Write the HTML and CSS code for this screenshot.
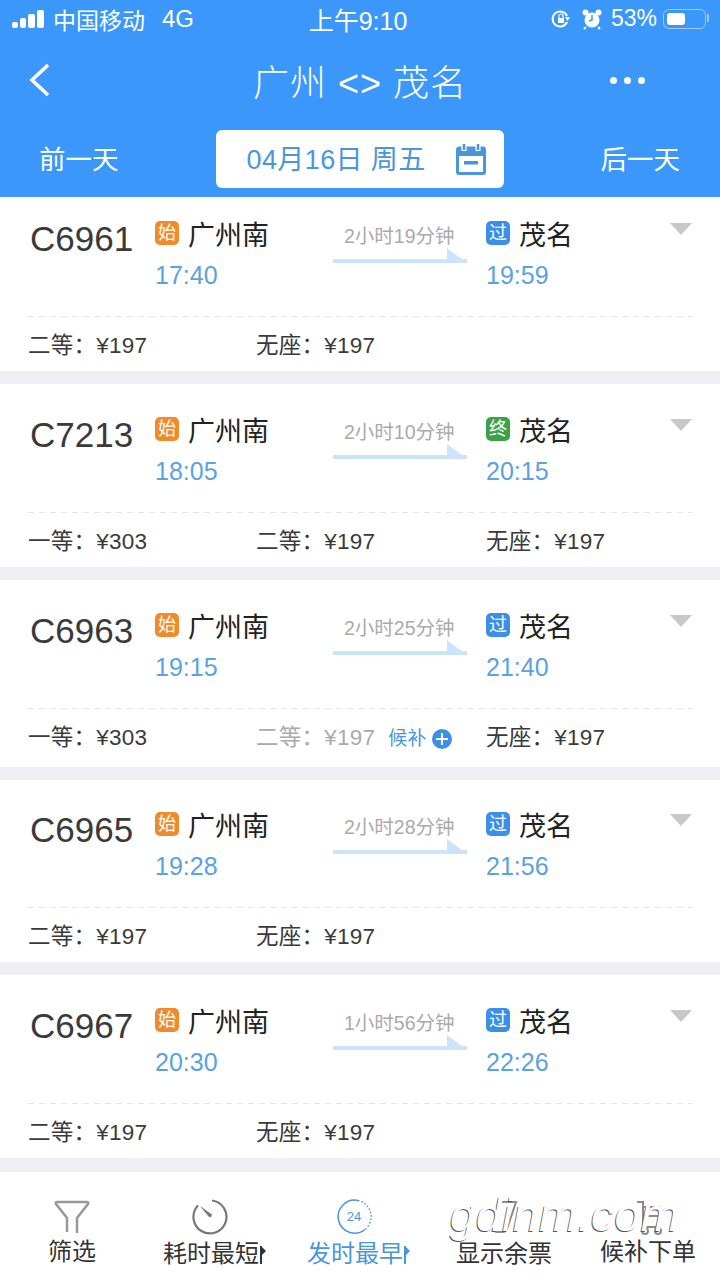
FILE: index.html
```html
<!DOCTYPE html>
<html lang="zh-CN">
<head>
    <meta charset="UTF-8">
    <meta name="viewport" content="width=device-width, initial-scale=1.0">
    <title>广州 &lt;&gt; 茂名</title>
    <link rel="stylesheet" href="styles.css">
</head>
<body>
    <div class="page">
        <header class="header">
            <div class="status">
                <div class="status-left">
                    <svg class="signal" width="34" height="20" viewBox="0 0 34 20"><rect x="0" y="13" width="6" height="6" rx="2" fill="#fff"/><rect x="8" y="9" width="6" height="10" rx="2" fill="#fff"/><rect x="16" y="5" width="7" height="14" rx="2" fill="#fff"/><rect x="25" y="1" width="7" height="18" rx="2" fill="#fff"/></svg>
                    <span>中国移动</span>
                    <span class="net">4G</span>
                </div>
                <div class="status-time">上午9:10</div>
                <div class="status-right">
                    <svg width="20" height="20" viewBox="0 0 20 20"><path d="M16 13a7.500 7.500 0 1 1 0-6" fill="none" stroke="#fff" stroke-width="2"/><path d="M14 8h5l-2.500 4z" fill="#fff"/><rect x="7" y="9" width="6" height="5" fill="#fff"/><path d="M8 9V7a2 2 0 0 1 4 0v2" fill="none" stroke="#fff" stroke-width="1.200"/></svg>
                    <svg class="alarm" width="22" height="22" viewBox="0 0 22 22"><circle cx="11" cy="12" r="7.500" fill="#fff"/><path d="M11 7v5l-3 1" fill="none" stroke="#3c97fa" stroke-width="1.500"/><circle cx="4.500" cy="4.500" r="3" fill="#fff"/><circle cx="17.500" cy="4.500" r="3" fill="#fff"/><path d="M5 19l-2 2M17 19l2 2" stroke="#fff" stroke-width="2"/></svg>
                    <span class="percent">53%</span>
                    <div class="battery"><div class="battery-fill"></div></div>
                </div>
            </div>
            <div class="nav">
                <svg width="26" height="36" viewBox="0 0 26 36"><path d="M21 3L5 18l16 15" fill="none" stroke="#fff" stroke-width="3.600"/></svg>
                <div class="nav-title">广州 &lt;&gt; 茂名</div>
                <div class="nav-more"><i></i><i></i><i></i></div>
            </div>
            <div class="dates">
                <div class="day">前一天</div>
                <div class="date-box">
                    <span class="date-text">04月16日 周五</span>
                    <svg width="30" height="32" viewBox="0 0 30 32"><path d="M3 5h24a1.500 1.500 0 0 1 1.500 1.500V29a1.500 1.500 0 0 1-1.500 1.500H3A1.500 1.500 0 0 1 1.500 29V6.500A1.500 1.500 0 0 1 3 5z" fill="none" stroke="#4a96dc" stroke-width="3"/><path d="M2 5h26v8H2z" fill="#4a96dc"/><path d="M8 1v7M22 1v7" stroke="#fff" stroke-width="5"/><path d="M8 1v6M22 1v6" stroke="#4a96dc" stroke-width="2.500"/><rect x="8" y="18" width="14" height="3.500" fill="#4a96dc"/></svg>
                </div>
                <div class="day">后一天</div>
            </div>
        </header>

        <main class="list">
            <section class="card first">
                <div class="train">
                    <div class="train-no">C6961</div>
                    <div class="stop"><div class="stop-name"><b class="tag orange">始</b>广州南</div><div class="stop-time">17:40</div></div>
                    <div class="route"><div class="duration">2小时19分钟</div><div class="arrow"></div></div>
                    <div class="stop"><div class="stop-name"><b class="tag blue">过</b>茂名</div><div class="stop-time">19:59</div></div>
                    <div class="caret"></div>
                </div>
                <div class="prices"><div class="price">二等：¥197</div><div class="price">无座：¥197</div></div>
            </section>
            <section class="card">
                <div class="train">
                    <div class="train-no">C7213</div>
                    <div class="stop"><div class="stop-name"><b class="tag orange">始</b>广州南</div><div class="stop-time">18:05</div></div>
                    <div class="route"><div class="duration">2小时10分钟</div><div class="arrow"></div></div>
                    <div class="stop"><div class="stop-name"><b class="tag green">终</b>茂名</div><div class="stop-time">20:15</div></div>
                    <div class="caret"></div>
                </div>
                <div class="prices"><div class="price">一等：¥303</div><div class="price">二等：¥197</div><div class="price">无座：¥197</div></div>
            </section>
            <section class="card tall">
                <div class="train">
                    <div class="train-no">C6963</div>
                    <div class="stop"><div class="stop-name"><b class="tag orange">始</b>广州南</div><div class="stop-time">19:15</div></div>
                    <div class="route"><div class="duration">2小时25分钟</div><div class="arrow"></div></div>
                    <div class="stop"><div class="stop-name"><b class="tag blue">过</b>茂名</div><div class="stop-time">21:40</div></div>
                    <div class="caret"></div>
                </div>
                <div class="prices">
                    <div class="price">一等：¥303</div>
                    <div class="price sold">二等：¥197<span class="wait">候补<i class="plus"></i></span></div>
                    <div class="price">无座：¥197</div>
                </div>
            </section>
            <section class="card slim">
                <div class="train">
                    <div class="train-no">C6965</div>
                    <div class="stop"><div class="stop-name"><b class="tag orange">始</b>广州南</div><div class="stop-time">19:28</div></div>
                    <div class="route"><div class="duration">2小时28分钟</div><div class="arrow"></div></div>
                    <div class="stop"><div class="stop-name"><b class="tag blue">过</b>茂名</div><div class="stop-time">21:56</div></div>
                    <div class="caret"></div>
                </div>
                <div class="prices"><div class="price">二等：¥197</div><div class="price">无座：¥197</div></div>
            </section>
            <section class="card">
                <div class="train">
                    <div class="train-no">C6967</div>
                    <div class="stop"><div class="stop-name"><b class="tag orange">始</b>广州南</div><div class="stop-time">20:30</div></div>
                    <div class="route"><div class="duration">1小时56分钟</div><div class="arrow"></div></div>
                    <div class="stop"><div class="stop-name"><b class="tag blue">过</b>茂名</div><div class="stop-time">22:26</div></div>
                    <div class="caret"></div>
                </div>
                <div class="prices"><div class="price">二等：¥197</div><div class="price">无座：¥197</div></div>
            </section>
        </main>

        <footer class="tabs">
            <div class="tab">
                <svg width="36" height="36" viewBox="0 0 36 36"><path d="M13 33V19L2 5q-1-2 1-2h30q2 0 1 2L23 19v15" fill="none" stroke="#999" stroke-width="2.500"/></svg>
                <div class="tab-label short">筛选</div>
            </div>
            <div class="tab sort">
                <svg width="36" height="36" viewBox="0 0 36 36"><path d="M20 1.500a16.500 16.500 0 1 1-14 5" fill="none" stroke="#777" stroke-width="2.200"/><path d="M8 7l12 8.500-1 3-2.500-1z" fill="#777"/></svg>
                <div class="tab-label">耗时最短<i class="mark"></i></div>
            </div>
            <div class="tab sort active">
                <svg width="36" height="36" viewBox="0 0 36 36"><path d="M22 1.500a16.500 16.500 0 1 0 7 29" fill="none" stroke="#4a96dc" stroke-width="1.500"/><path d="M22 1.500a16.500 16.500 0 0 1 7 29" fill="none" stroke="#4a96dc" stroke-width="1.500" stroke-dasharray="1.500 2"/><text x="18" y="22" text-anchor="middle" class="tab-num">24</text></svg>
                <div class="tab-label">发时最早<i class="mark"></i></div>
            </div>
            <div class="tab">
                <svg width="36" height="36" viewBox="0 0 36 36"><path d="M12 3h18l-9 27q-1 3-5 3h-5q-3 0-2-3z" fill="none" stroke="#8b8b8b" stroke-width="2"/></svg>
                <div class="tab-label">显示余票</div>
            </div>
            <div class="tab raised">
                <svg width="36" height="36" viewBox="0 0 36 36"><path d="M7 3h6v25h17M13 8h17M13 17h17" fill="none" stroke="#8b8b8b" stroke-width="2"/><circle cx="15" cy="32" r="3" fill="none" stroke="#8b8b8b" stroke-width="2"/><circle cx="28" cy="32" r="3" fill="none" stroke="#8b8b8b" stroke-width="2"/></svg>
                <div class="tab-label">候补下单</div>
            </div>
            <div class="watermark">gdinm.com</div>
        </footer>
    </div>
</body>
</html>
```

FILE: styles.css
```css
* {
    box-sizing: border-box;
}
body {
    margin: 0;
    font-family: "Liberation Sans", "Noto Sans CJK SC", sans-serif;
    color: #3a3a3a;
    background: #eeeef3;
}
.page {
    width: 720px;
    height: 1280px;
    overflow: hidden;
    display: flex;
    flex-direction: column;
}

/* header */
.header {
    height: 197px;
    background: #3c97fa;
    color: #fff;
}
.status {
    height: 40px;
    padding: 0 12px 3px;
    display: grid;
    grid-template-columns: 1fr auto 1fr;
    align-items: center;
    font-size: 23px;
}
.status-left {
    display: flex;
    align-items: center;
    gap: 7px;
}
.net {
    margin-left: 10px;
    font-size: 24px;
}
.status-time {
    margin-right: 4px;
    font-size: 25px;
}
.status-right {
    display: flex;
    align-items: center;
    justify-content: flex-end;
}
.alarm {
    margin-left: 10px;
}
.percent {
    margin: 0 6px 0 8px;
    font-size: 23px;
}
.battery {
    width: 43px;
    height: 20px;
    margin-right: 2px;
    padding: 3px;
    border: 1.500px solid rgba(255, 255, 255, 0.5);
    border-radius: 6px;
    position: relative;
}
.battery::after {
    content: "";
    position: absolute;
    right: -4px;
    top: 4px;
    width: 2px;
    height: 8px;
    background: rgba(255, 255, 255, 0.5);
}
.battery-fill {
    width: 18px;
    height: 100%;
    background: #fff;
    border-radius: 3px;
}
.nav {
    height: 80px;
    padding: 0 27px;
    display: grid;
    grid-template-columns: 1fr auto 1fr;
    align-items: center;
}
.nav-title {
    font-size: 36px;
    letter-spacing: 1px;
    font-weight: 300;
}
.nav-more {
    justify-self: end;
    margin-right: 48px;
    display: flex;
    gap: 7px;
}
.nav-more i {
    width: 7px;
    height: 7px;
    border-radius: 50%;
    background: #fff;
}
.dates {
    padding: 10px 40px 0 39px;
    display: flex;
    align-items: center;
    justify-content: space-between;
}
.day {
    margin-bottom: 4px;
    font-size: 26.500px;
}
.date-box {
    width: 288px;
    height: 58px;
    padding: 0 18px 0 31px;
    display: flex;
    align-items: center;
    justify-content: space-between;
    background: #fff;
    border-radius: 6px;
    color: #4a96dc;
    font-size: 27px;
}
.date-text {
    margin-bottom: 4px;
    letter-spacing: 0.400px;
}

/* train list */
.list {
    flex: 1;
    display: flex;
    flex-direction: column;
    gap: 13px;
}
.card {
    height: 183px;
    padding: 27px 28px 0;
    background: #fff;
}
.card.first {
    height: 174px;
    padding-top: 18px;
}
.card.tall {
    height: 187px;
}
.card.slim {
    height: 182px;
    padding-top: 26px;
}
.train {
    height: 102px;
    display: grid;
    grid-template-columns: 127px 178px 153px 1fr 22px;
    align-items: start;
    background: repeating-linear-gradient(90deg, #e4e4e4 0 6px, transparent 6px 11px) 0 100% / 100% 1px no-repeat;
}
.train-no {
    margin-top: 2px;
    padding-left: 2px;
    font-size: 35px;
    line-height: 44px;
}
.stop-name {
    display: flex;
    align-items: center;
    height: 36px;
    font-size: 27px;
    color: #222;
}
.tag {
    width: 24px;
    height: 24px;
    margin-right: 9px;
    border-radius: 5px;
    color: #fff;
    font-size: 18px;
    font-weight: 400;
    line-height: 24px;
    text-align: center;
}
.tag.orange {
    background: #ef8b2c;
}
.tag.blue {
    background: #3c8fe8;
}
.tag.green {
    background: #3da14a;
}
.stop-time {
    margin-top: 6px;
    color: #5aa2e0;
    font-size: 25px;
    line-height: 36px;
}
.route {
    width: 134px;
    padding-top: 7px;
}
.duration {
    padding-left: 11px;
    color: #aaa;
    font-size: 19.500px;
    line-height: 28px;
    white-space: nowrap;
}
.arrow {
    height: 15px;
    margin-top: -2px;
    background:
        linear-gradient(#cbe3fb, #cbe3fb) 0 100% / 100% 4px no-repeat;
    position: relative;
}
.arrow::after {
    content: "";
    position: absolute;
    right: 0;
    bottom: 0;
    border-left: 20px solid transparent;
    border-bottom: 15px solid #cbe3fb;
    transform: scaleX(-1);
}
.caret {
    width: 0;
    height: 0;
    margin-top: 8px;
    border-left: 11px solid transparent;
    border-right: 11px solid transparent;
    border-top: 12px solid #c8c8c8;
}
.prices {
    display: grid;
    grid-template-columns: 228px 230px 1fr;
    padding-top: 12px;
    font-size: 22.500px;
    letter-spacing: 0.250px;
    line-height: 34px;
}
.price {
    white-space: nowrap;
}
.sold {
    color: #aaa;
}
.wait {
    display: inline-flex;
    align-items: center;
    gap: 5px;
    margin-left: 13px;
    color: #4a96dc;
    font-size: 19px;
}
.plus {
    width: 20px;
    height: 20px;
    border-radius: 50%;
    background:
        linear-gradient(#fff, #fff) center / 12px 2px no-repeat,
        linear-gradient(#fff, #fff) center / 2px 12px no-repeat,
        #3c8fe8;
}

/* bottom tabs */
.tabs {
    height: 108px;
    padding-top: 27px;
    display: grid;
    grid-template-columns: repeat(5, 144px);
    align-items: start;
    background: #fff;
    position: relative;
}
.tab {
    display: flex;
    flex-direction: column;
    align-items: center;
    font-size: 24px;
    color: #333;
}
.sort svg {
    margin-right: 12px;
}
.tab-label {
    margin-top: 2px;
    line-height: 34px;
    white-space: nowrap;
}
.tab-label.short,
.raised .tab-label {
    margin-top: 0;
}
.tab-num {
    font-size: 13px;
    fill: #4a96dc;
}
.active {
    color: #4a96dc;
}
.mark {
    display: inline-block;
    width: 9px;
    height: 18px;
    margin-left: 1px;
    border-left: 2px solid currentColor;
    vertical-align: -2px;
    position: relative;
}
.mark::after {
    content: "";
    position: absolute;
    left: 0;
    top: 1px;
    border-left: 4px solid currentColor;
    border-top: 4px solid transparent;
    border-bottom: 4px solid transparent;
}
.watermark {
    position: absolute;
    left: 450px;
    top: 15px;
    color: #fff;
    font-size: 46px;
    font-style: italic;
    line-height: 56px;
    text-shadow: -1px 1px 0 #555;
    letter-spacing: 0.500px;
}
```
